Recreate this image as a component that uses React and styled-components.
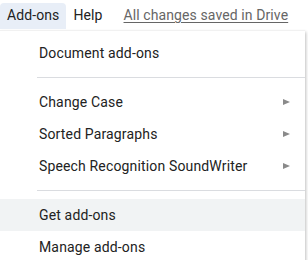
import React from 'react';
import styled, { createGlobalStyle } from 'styled-components';

const GlobalStyle = createGlobalStyle`
  html, body {
    margin: 0;
    padding: 0;
    background: #ffffff;
    font-family: Roboto, "Liberation Sans", Arial, sans-serif;
  }
`;

const menuItems = [
  { label: 'Document add-ons' },
  { divider: true },
  { label: 'Change Case', submenu: true },
  { label: 'Sorted Paragraphs', submenu: true },
  { label: 'Speech Recognition SoundWriter', submenu: true },
  { divider: true },
  { label: 'Get add-ons', hover: true },
  { label: 'Manage add-ons' },
];

function App() {
  return (
    <>
      <GlobalStyle />
      <Page>
        <MenuBar>
          <MenuTab active>Add-ons</MenuTab>
          <MenuTab>Help</MenuTab>
          <SaveStatus>All changes saved in Drive</SaveStatus>
        </MenuBar>
        <Dropdown>
          {menuItems.map((item, i) =>
            item.divider ? (
              <Divider key={i} />
            ) : (
              <Item key={i} hover={item.hover}>
                <span>{item.label}</span>
                {item.submenu ? <Arrow /> : null}
              </Item>
            )
          )}
        </Dropdown>
      </Page>
    </>
  );
}

export default App;

const Page = styled.div`
  width: 308px;
  height: 260px;
  overflow: hidden;
  display: flex;
  flex-direction: column;
`
const MenuBar = styled.div`
  display: flex;
  align-items: flex-end;
  height: 29px;
  padding-top: 3px;
  box-sizing: border-box;
`
const MenuTab = styled.div`
  height: 26px;
  line-height: 25px;
  padding: 0 7px;
  font-size: 14px;
  letter-spacing: 0.1px;
  color: #222222;
  background: ${p => (p.active ? '#e8eef7' : 'transparent')};
  border-radius: 4px 4px 0 0;
`
const SaveStatus = styled.div`
  height: 26px;
  line-height: 25px;
  margin-left: 14px;
  font-size: 14px;
  letter-spacing: 0.1px;
  color: #666666;
  text-decoration: underline;
  text-underline-offset: 2px;
`
const Dropdown = styled.div`
  width: 305px;
  margin-top: 1px;
  padding: 6px 0;
  background: #ffffff;
  border-top: 1px solid #f1f1f1;
  box-shadow: 1px 2px 3px rgba(0, 0, 0, 0.25);
`
const Item = styled.div`
  display: flex;
  align-items: center;
  justify-content: space-between;
  height: 32px;
  padding: 0 15px 0 39px;
  font-size: 14px;
  letter-spacing: 0.15px;
  color: #222222;
  background: ${p => (p.hover ? '#f1f3f4' : 'transparent')};
`
const Arrow = styled.span`
  width: 0;
  height: 0;
  border-top: 3.5px solid transparent;
  border-bottom: 3.5px solid transparent;
  border-left: 7px solid #8a8a8a;
`
const Divider = styled.div`
  height: 1px;
  margin: 8px 0 8px 37px;
  background: #dadce0;
`
